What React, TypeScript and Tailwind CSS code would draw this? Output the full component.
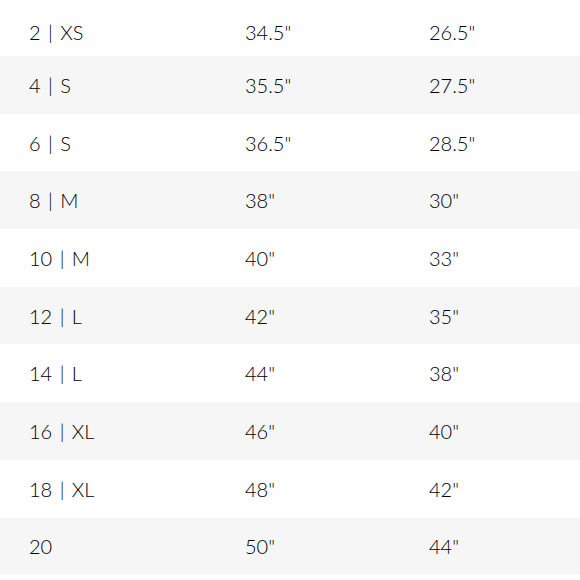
import React from "react";

const rows: [string, string, string][] = [
  ["2 | XS", '34.5"', '26.5"'],
  ["4 | S", '35.5"', '27.5"'],
  ["6 | S", '36.5"', '28.5"'],
  ["8 | M", '38"', '30"'],
  ["10 | M", '40"', '33"'],
  ["12 | L", '42"', '35"'],
  ["14 | L", '44"', '38"'],
  ["16 | XL", '46"', '40"'],
  ["18 | XL", '48"', '42"'],
  ["20", '50"', '44"'],
];

export default function App() {
  return (
    <div
      className="w-[580px] h-[580px] bg-white text-[#000000] text-[20px] font-light [word-spacing:2px] overflow-hidden"
      style={{ fontFamily: "Lato, 'Open Sans', sans-serif" }}
    >
      {rows.map((r, i) => (
        <div
          key={i}
          className={
            i === 0
              ? "grid grid-cols-[216px_184px_1fr] items-center h-[56px] pt-[7px] pl-[29px] bg-white"
              : i % 2 === 1
              ? "grid grid-cols-[216px_184px_1fr] items-center h-[57.7px] pl-[29px] bg-[#f6f6f6]"
              : "grid grid-cols-[216px_184px_1fr] items-center h-[57.7px] pl-[29px] bg-white"
          }
        >
          <div>{r[0]}</div>
          <div>{r[1]}</div>
          <div>{r[2]}</div>
        </div>
      ))}
    </div>
  );
}
